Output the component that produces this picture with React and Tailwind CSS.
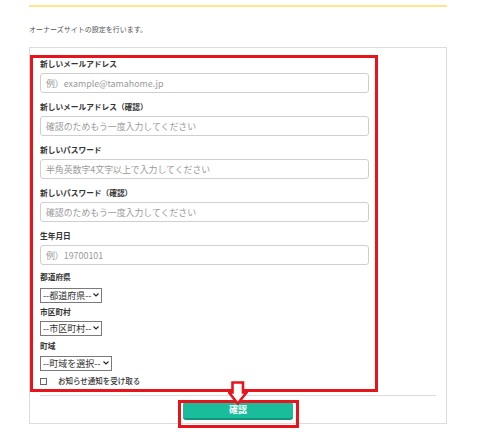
import React from 'react'

const font = { fontFamily: '"Noto Sans CJK JP", "Noto Sans", sans-serif' }

function Field({ label, placeholder, className = '' }) {
  return (
    <div className={className}>
      <div className="h-[12px] leading-[12px] text-[7.7px] font-bold text-[#333]">{label}</div>
      <input
        className="mt-[3px] block h-[20px] w-[329px] rounded-[3px] border border-[#cfcfcf] bg-white pl-[5px] text-[8.9px] text-[#333] placeholder:text-[#9a9a9a] outline-none"
        placeholder={placeholder}
      />
    </div>
  )
}

function Select({ label, value, width }) {
  return (
    <span className="relative block" style={{ width }}>
      <select className="block h-[15px] w-full appearance-none border border-[#7a7a7a] bg-white pl-[2px] text-[9px] leading-[13px] text-[#333] outline-none" aria-label={label}>
        <option>{value}</option>
      </select>
      <svg className="pointer-events-none absolute right-[3px] top-[5px]" width="6" height="4" viewBox="0 0 6 4">
        <path d="M0.5 0.5 L3 3 L5.5 0.5" fill="none" stroke="#222" strokeWidth="1.1" />
      </svg>
    </span>
  )
}

export default function App() {
  return (
    <div className="h-[435px] w-[480px] bg-white pl-[29px] pt-[5px]" style={font}>
      <div className="w-[418px]">
        <div className="h-[2px] bg-[#ffe68c]" />
        <p className="mt-[17px] h-[10px] leading-[10px] text-[7px] text-[#555]">オーナーズサイトの設定を行います。</p>

        <div className="relative mt-[13px] border border-[#dcdcdc] pb-[3px]">
          <div className="mt-[7px] w-[348px] border-[3px] border-[#e8141c] pb-[2px] pl-[7px] pr-[6px]">
            <Field label="新しいメールアドレス" placeholder="例）example@tamahome.jp" className="mb-[8px]" />
            <Field label="新しいメールアドレス（確認）" placeholder="確認のためもう一度入力してください" className="mb-[8px]" />
            <Field label="新しいパスワード" placeholder="半角英数字4文字以上で入力してください" className="mb-[8px]" />
            <Field label="新しいパスワード（確認）" placeholder="確認のためもう一度入力してください" className="mb-[8px]" />
            <Field label="生年月日" placeholder="例）19700101" />

            <div className="mt-[6px] h-[12px] leading-[12px] text-[7.7px] font-bold text-[#333]">都道府県</div>
            <div className="mt-[5px]"><Select label="都道府県" value="--都道府県--" width={62} /></div>
            <div className="mt-[3px] h-[12px] leading-[12px] text-[7.7px] font-bold text-[#333]">市区町村</div>
            <div className="mt-[3px]"><Select label="市区町村" value="--市区町村--" width={62} /></div>
            <div className="mt-[4px] h-[12px] leading-[12px] text-[7.7px] font-bold text-[#333]">町域</div>
            <div className="mt-[4px]"><Select label="町域" value="--町域を選択--" width={72} /></div>

            <label className="mt-[4px] flex h-[12px] items-center text-[7.5px] text-[#333]">
              <input type="checkbox" className="h-[7px] w-[7px] appearance-none border border-[#666] bg-white" />
              <span className="ml-[11px] font-medium">お知らせ通知を受け取る</span>
            </label>
          </div>

          <div className="mx-[10px] mt-[3px] h-px bg-[#dddddd]" />

          <div className="relative mx-auto mt-[6px] w-[110px]">
            <button className="block h-[18px] w-full rounded-[3px] border-b-2 border-[#12967b] bg-[#1abc9c] text-[9px] font-bold leading-[16px] text-white">
              確認
            </button>
            <div className="pointer-events-none absolute -left-[5px] -top-[2px] h-[28px] w-[121px] border-[3px] border-[#e8141c]" />
            <svg className="pointer-events-none absolute left-[45px] -top-[21px]" width="20" height="25" viewBox="0 0 20 25">
              <path d="M4.5 1.5 H15 V11.5 H18.5 L9.75 22.5 L1 11.5 H4.5 Z" fill="#fff" stroke="#e8141c" strokeWidth="2.6" strokeLinejoin="miter" />
            </svg>
          </div>
        </div>
      </div>
    </div>
  )
}
